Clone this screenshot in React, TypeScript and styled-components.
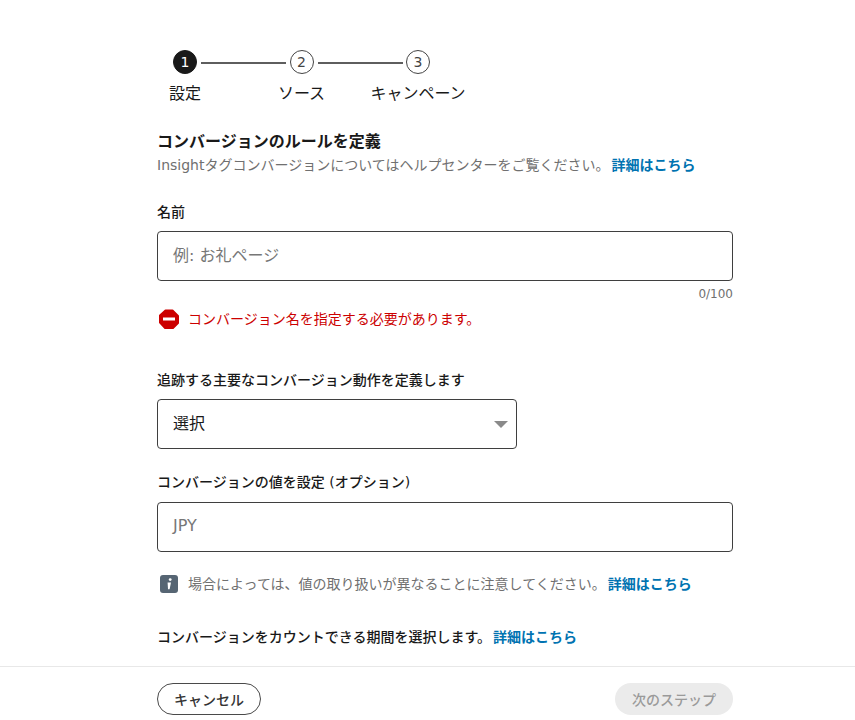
import React from 'react'

import styled, { createGlobalStyle } from 'styled-components'

const GlobalStyle = createGlobalStyle`
    html, body {
        margin: 0;
        padding: 0;
        background: #fff;
    }

    body {
        font-family: "DejaVu Sans", "Noto Sans CJK JP", sans-serif;
        color: #191919;
        text-spacing-trim: space-all;
    }
`

const Page = styled.div`
    display: flex;
    flex-direction: column;
    height: 720px;
    overflow: hidden;
`

const Content = styled.main`
    flex: 1;
    padding: 50px 122px 0 157px;
`

const Steps = styled.ol`
    display: flex;
    list-style: none;
    margin: 0;
    padding: 0 0 0 12px;
`

const Step = styled.li`
    display: flex;
    flex-direction: column;
    align-items: center;
    width: 32px;
    margin-right: 84.5px;
`

const StepCircle = styled.span<{ $active?: boolean }>`
    position: relative;
    box-sizing: border-box;
    display: flex;
    align-items: center;
    justify-content: center;
    width: 24px;
    height: 24px;
    border-radius: 50%;
    border: 1px solid ${(p) => (p.$active ? '#191919' : '#444')};
    background: ${(p) => (p.$active ? '#191919' : '#fff')};
    color: ${(p) => (p.$active ? '#fff' : '#444')};
    font-size: 14px;
    line-height: 1;
`

const StepLine = styled.span`
    position: absolute;
    left: 27px;
    top: 10.5px;
    width: 85px;
    height: 2px;
    background: #5e5e5e;
`

const StepLabel = styled.span`
    margin-top: 9px;
    font-size: 16px;
    line-height: 22px;
    white-space: nowrap;
`

const Title = styled.h1`
    margin: 25px 0 0;
    font-size: 16px;
    line-height: 24px;
    font-weight: 700;
`

const Subtitle = styled.p`
    margin: 0;
    font-size: 14px;
    line-height: 22px;
    color: #707070;
`

const LearnMore = styled.a`
    margin-left: 2px;
    color: #0073b1;
    font-weight: 700;
`

const FieldLabel = styled.label<{ $top: number; $gap: number }>`
    display: block;
    margin-top: ${(p) => p.$top}px;
    margin-bottom: ${(p) => p.$gap}px;
    font-size: 14px;
    line-height: 20px;
    font-weight: 500;
`

const InputBox = styled.div<{ $width?: number }>`
    box-sizing: border-box;
    display: flex;
    align-items: center;
    justify-content: space-between;
    width: ${(p) => (p.$width ? `${p.$width}px` : '100%')};
    height: 50px;
    padding: 0 15px 4px;
    border: 1px solid #3f3f3f;
    border-radius: 4px;
    font-size: 16px;
`

const Placeholder = styled.span`
    color: #777;
`

const SelectValue = styled.span`
    color: #191919;
`

const Caret = styled.svg`
    width: 14px;
    height: 7px;
    margin: 4px -7px 0 0;
    fill: #8a8a8a;
`

const Counter = styled.div`
    margin-top: 5px;
    text-align: right;
    font-size: 12px;
    line-height: 16px;
    color: #707070;
`

const Message = styled.div<{ $error?: boolean }>`
    display: flex;
    align-items: center;
    gap: 9px;
    padding-left: 2px;
    font-size: 14px;
    line-height: 22px;
    color: ${(p) => (p.$error ? '#cc0000' : '#707070')};
`

const ErrorMessage = styled(Message)`
    margin-top: 6px;
`

const InfoMessage = styled(Message)`
    margin-top: 21px;
`

const MessageIcon = styled.svg`
    flex: none;
    width: 20px;
    height: 20px;
`

const Footer = styled.footer`
    box-sizing: border-box;
    display: flex;
    align-items: flex-start;
    justify-content: space-between;
    height: 54px;
    padding: 16px 122px 0 157px;
    border-top: 1px solid #e8e8e8;
`

const PillButton = styled.button<{ $disabled?: boolean }>`
    box-sizing: border-box;
    height: 32px;
    border-radius: 16px;
    border: ${(p) => (p.$disabled ? 'none' : '1px solid #4a4a4a')};
    background: ${(p) => (p.$disabled ? '#ebebeb' : '#fff')};
    color: ${(p) => (p.$disabled ? '#9a9a9a' : '#333')};
    font-family: inherit;
    font-size: 14px;
    font-weight: 500;
    padding: 0;
`

const CancelButton = styled(PillButton)`
    width: 104px;
`

const NextButton = styled(PillButton)`
    width: 118px;
`

const steps = ['設定', 'ソース', 'キャンペーン']

function App() {
    return (
        <Page>
            <GlobalStyle />
            <Content>
                <Steps>
                    {steps.map((label, index) => (
                        <Step key={label}>
                            <StepCircle $active={index === 0}>
                                {index + 1}
                                {index < steps.length - 1 && <StepLine />}
                            </StepCircle>
                            <StepLabel>{label}</StepLabel>
                        </Step>
                    ))}
                </Steps>

                <Title>コンバージョンのルールを定義</Title>
                <Subtitle>
                    Insightタグコンバージョンについてはヘルプセンターをご覧ください。<LearnMore>詳細はこちら</LearnMore>
                </Subtitle>

                <FieldLabel $top={26} $gap={9}>名前</FieldLabel>
                <InputBox>
                    <Placeholder>例: お礼ページ</Placeholder>
                </InputBox>
                <Counter>0/100</Counter>
                <ErrorMessage $error>
                    <MessageIcon viewBox="0 0 20 20">
                        <path
                            d="M6.5 0.5h7a1 1 0 0 1 .7.3l5.5 5.5a1 1 0 0 1 .3.7v7a1 1 0 0 1-.3.7l-5.5 5.5a1 1 0 0 1-.7.3h-7a1 1 0 0 1-.7-.3L.3 14.2a1 1 0 0 1-.3-.7v-7a1 1 0 0 1 .3-.7L5.8.8a1 1 0 0 1 .7-.3z"
                            fill="#cc0000"
                        />
                        <rect x="4" y="8.5" width="12" height="3" fill="#fff" />
                    </MessageIcon>
                    コンバージョン名を指定する必要があります。
                </ErrorMessage>

                <FieldLabel $top={40} $gap={9}>追跡する主要なコンバージョン動作を定義します</FieldLabel>
                <InputBox $width={360}>
                    <SelectValue>選択</SelectValue>
                    <Caret viewBox="0 0 14 7">
                        <polygon points="0,0 14,0 7,7" />
                    </Caret>
                </InputBox>

                <FieldLabel $top={23} $gap={10}>コンバージョンの値を設定 (オプション)</FieldLabel>
                <InputBox>
                    <Placeholder>JPY</Placeholder>
                </InputBox>
                <InfoMessage>
                    <MessageIcon viewBox="0 0 20 20">
                        <rect x="1" y="1" width="18" height="18" rx="3" fill="#566573" />
                        <circle cx="11.2" cy="5.6" r="1.4" fill="#fff" />
                        <path d="M8.6 8.4h3.4l-1.4 6.8H9z" fill="#fff" />
                    </MessageIcon>
                    <span>
                        場合によっては、値の取り扱いが異なることに注意してください。<LearnMore>詳細はこちら</LearnMore>
                    </span>
                </InfoMessage>

                <FieldLabel $top={32} $gap={0}>
                    コンバージョンをカウントできる期間を選択します。<LearnMore>詳細はこちら</LearnMore>
                </FieldLabel>
            </Content>
            <Footer>
                <CancelButton>キャンセル</CancelButton>
                <NextButton $disabled>次のステップ</NextButton>
            </Footer>
        </Page>
    )
}

export default App
